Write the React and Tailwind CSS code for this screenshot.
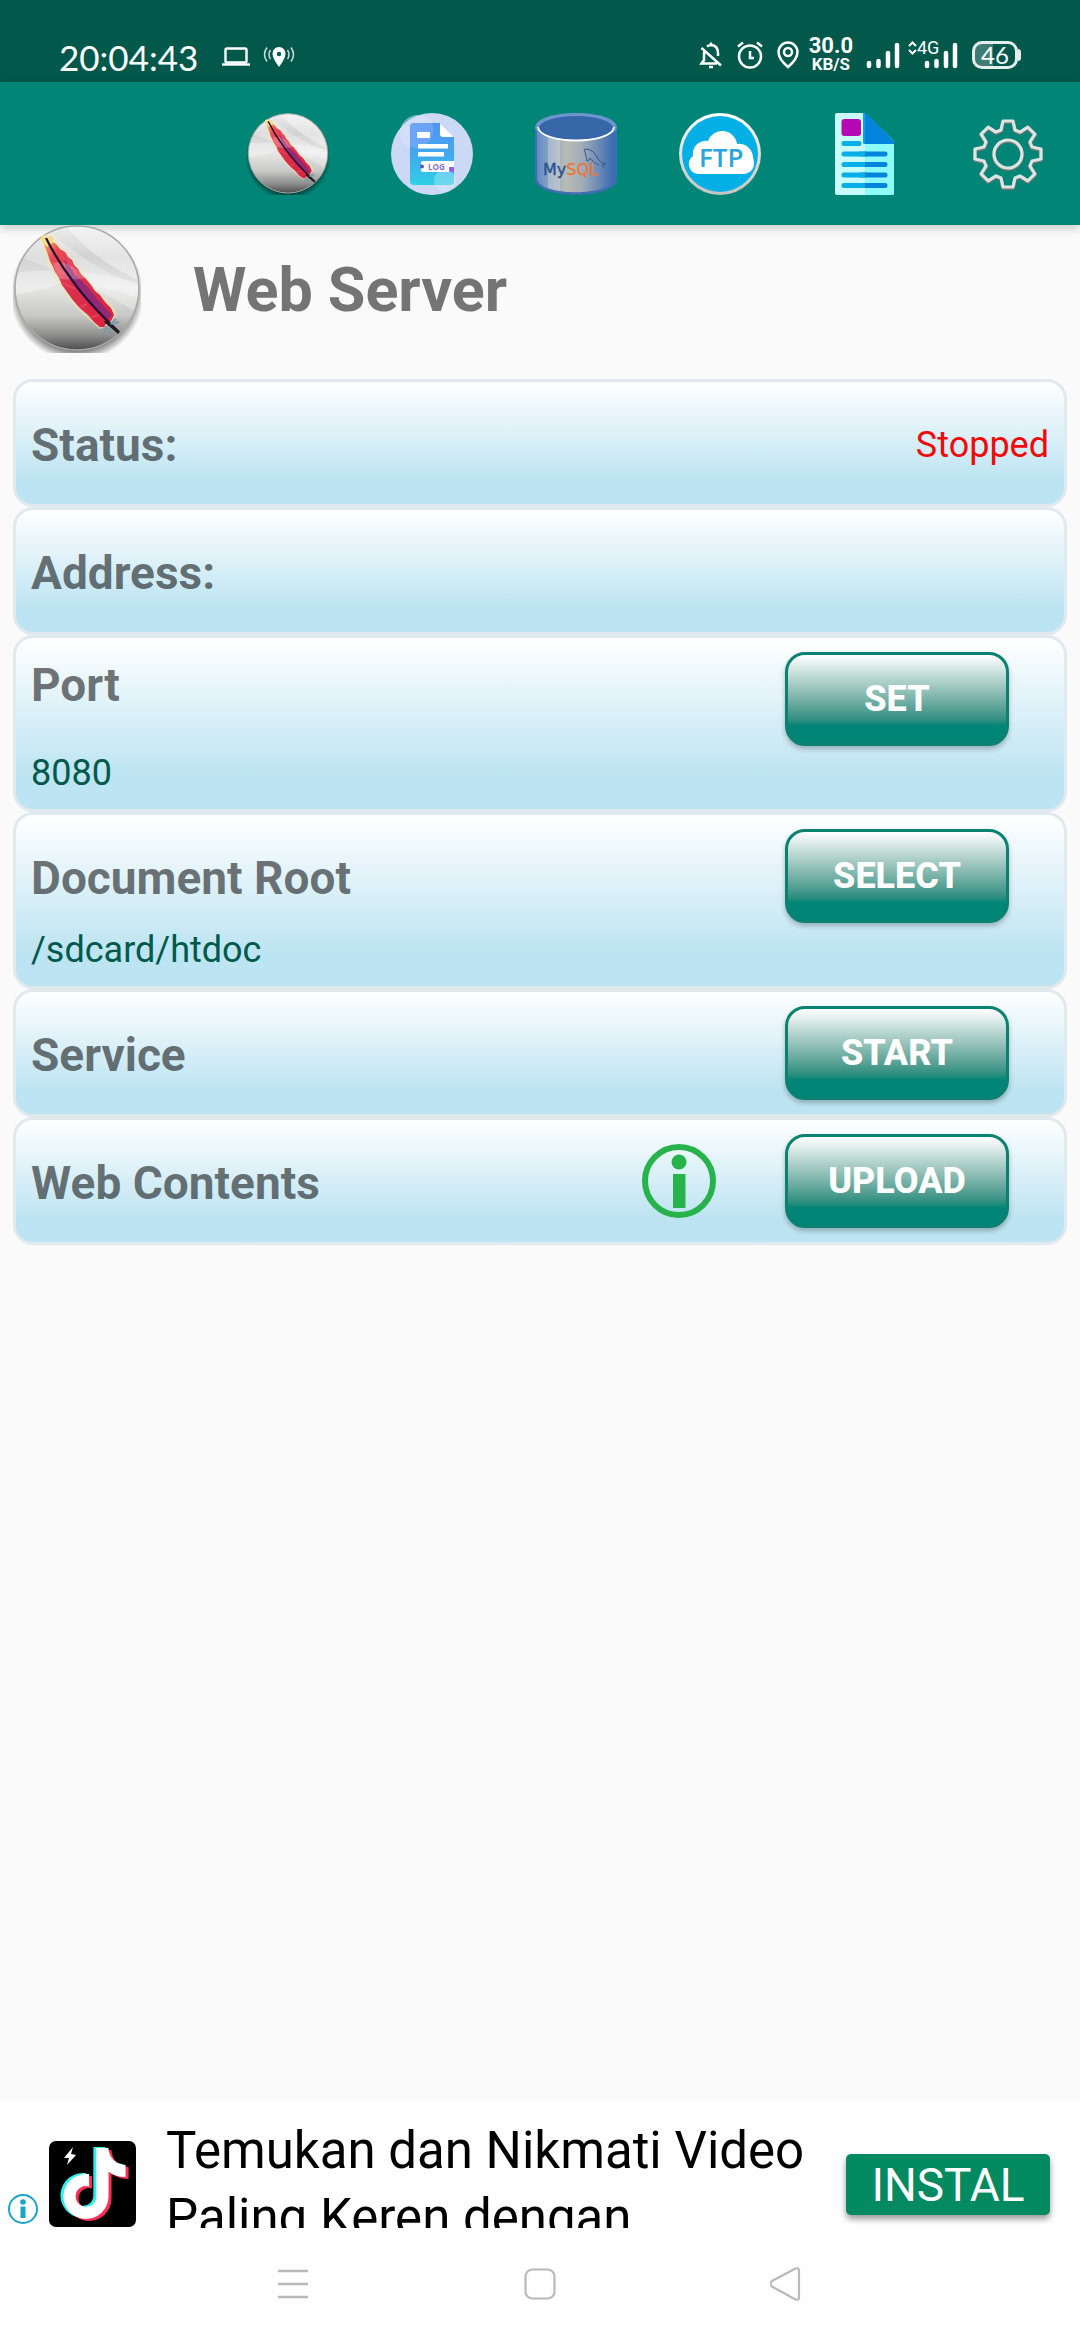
import { FaTiktok } from "react-icons/fa6";
import { useId } from "react";

function FeatherLogo({ className }) {
  const id = useId();
  return (
    <svg viewBox="0 0 128 128" className={className} aria-hidden="true">
      <defs>
        <linearGradient id={id + "m"} x1="0" y1="0" x2="0" y2="1">
          <stop offset="0" stopColor="#ededed" />
          <stop offset="0.25" stopColor="#d2d2d2" />
          <stop offset="0.5" stopColor="#e6e6e6" />
          <stop offset="0.72" stopColor="#c8c8c6" />
          <stop offset="0.88" stopColor="#8e8e8e" />
          <stop offset="1" stopColor="#4c4c4c" />
        </linearGradient>
        <linearGradient id={id + "f"} x1="0" y1="0" x2="1" y2="1">
          <stop offset="0" stopColor="#f6b06a" />
          <stop offset="0.15" stopColor="#ea4a55" />
          <stop offset="0.45" stopColor="#d8324f" />
          <stop offset="1" stopColor="#e0203a" />
        </linearGradient>
        <radialGradient id={id + "s"} cx="0.5" cy="0.5" r="0.5">
          <stop offset="0.84" stopColor="#000" stopOpacity="0.5" />
          <stop offset="1" stopColor="#000" stopOpacity="0" />
        </radialGradient>
        <clipPath id={id + "c"}>
          <circle cx="64" cy="63" r="61" />
        </clipPath>
      </defs>
      <circle cx="64" cy="69" r="67" fill={`url(#${id}s)`} />
      <circle cx="64" cy="63" r="62" fill={`url(#${id}m)`} stroke="#a9a9a9" strokeWidth="1.5" />
      <g clipPath={`url(#${id}c)`}>
        <path d="M0 30 Q60 48 128 90 V62 Q70 40 30 0 Z" fill="#fff" opacity="0.28" />
        <path d="M52 0 Q80 35 128 56 V20 L90 0 Z" fill="#fff" opacity="0.4" />
        <path d="M0 70 Q30 66 50 57 Q90 60 128 74 V58 Q60 40 0 48 Z" fill="#fff" opacity="0.3" />
      </g>
      <path
        d="M30 12 L32 23 Q36 38 42 48 Q47 59 54 68 Q61 79 69 86 L87 102 L94 99 L102 88 Q94 77 82 66 Q72 51 60 38 Q53 28 46 23 L38 12 Z"
        fill="none"
        stroke="#f2e7a8"
        strokeWidth="4"
        strokeLinejoin="round"
        opacity="0.5"
      />
      <path
        d="M31 20 L34 27 L37 36 L40 42 L42 47 L46 53 L49 60 L54 67 L59 74 L64 80 L69 85 L75 90 L81 97 L87 102 L91 102 L94 97 L98 96 L101 90 L98 83 L92 77 L87 70 L82 66 L78 60 L73 54 L68 49 L65 44 L61 40 L59 35 L55 32 L52 27 L47 24 L43 19 L38 16 Z"
        fill={`url(#${id}f)`}
      />
      <path d="M50 30 Q58 40 61 49 Q75 61 87 77 L99 90 L94 95 Q79 82 68 67 Q61 58 54 47 Z" fill="#7c2a83" opacity="0.75" />
      <path d="M46 26 L56 40 M52 28 L59 44 M57 35 L63 50 M40 40 L52 50 M50 58 L62 64 M68 82 L74 79 M78 92 L86 90" stroke="#f0455d" strokeWidth="1.5" fill="none" />
      <path d="M27 14 L30 10 L33 14 L39 10 L41 17 L34 22 Z" fill="#f6dc86" />
      <path d="M44 53 Q58 56 72 53 L66 46 Q52 35 40 38 Z" fill="#fff" opacity="0.22" />
      <path d="M33 13 Q44 35 59 55 Q75 78 106 107" stroke="#241036" strokeWidth="2.2" fill="none" />
      <path d="M94 100 L106 97 M96 101 L103 94 M93 101 L92 109 M95 103 L98 109" stroke="#8199a6" strokeWidth="2.2" />
      <path d="M92 96 L106 108" stroke="#20201e" strokeWidth="2.8" />
    </svg>
  );
}

function LogLogo({ className }) {
  return (
    <svg viewBox="0 0 82 82" className={className} aria-hidden="true">
      <defs>
        <linearGradient id="logPage" x1="0" y1="0" x2="0" y2="1">
          <stop offset="0" stopColor="#5194f2" />
          <stop offset="0.5" stopColor="#42a8ee" />
          <stop offset="1" stopColor="#2fcfe6" />
        </linearGradient>
      </defs>
      <circle cx="41" cy="41" r="41" fill="#cbd9f7" />
      <circle cx="27" cy="20" r="18" fill="#dbe4fb" opacity="0.5" />
      <path d="M23 10 H49 L63 24 V68 Q63 72 59 72 H23 Q19 72 19 68 V14 Q19 10 23 10 Z" fill="url(#logPage)" />
      <path d="M19 34 V14 Q19 10 23 10 H41 A18 18 0 0 1 19 34 Z" fill="#7aa8f6" opacity="0.7" />
      <path d="M49 10 V21 Q49 24 52 24 H63 Z" fill="#fff" />
      <path d="M26 19 h13 v6 h-13 Z M27 31 h30 v4.500 h-30 Z M27 39 h26 v4.500 h-26 Z" fill="#fff" />
      <path d="M32 48 H63 V59 H32 Q30 59 30 57 V50 Q30 48 32 48 Z" fill="#fff" />
      <circle cx="31" cy="53.500" r="2" fill="#6b4fc4" />
      <path d="M63 54 H58 V59 H63 Z" fill="#8e63e0" />
      <text x="37" y="57" fontFamily="Open Sans, sans-serif" fontWeight="700" fontSize="8" fill="#8b6fd0">LOG</text>
      <circle cx="54" cy="68" r="11" fill="#d7f0fb" opacity="0.35" />
    </svg>
  );
}

function MySqlLogo({ className }) {
  return (
    <svg viewBox="0 0 82 82" className={className} aria-hidden="true">
      <defs>
        <linearGradient id="drum">
          <stop offset="0" stopColor="#5f8cc6" />
          <stop offset="0.16" stopColor="#8ba2bf" />
          <stop offset="0.38" stopColor="#b9bcb4" />
          <stop offset="0.6" stopColor="#9eabb8" />
          <stop offset="1" stopColor="#3a6ab0" />
        </linearGradient>
      </defs>
      <path d="M0 15 V66 C0 87 82 87 82 66 V15 Z" fill="#3f6db3" />
      <path d="M2 16 V65 C2 84 79 84 79 65 V16 Z" fill="url(#drum)" />
      <path d="M13 22 Q18 26 25 27 V78 Q18 77 13 75 Z" fill="#e8edf2" opacity="0.3" />
      <ellipse cx="41" cy="14" rx="41" ry="14" fill="#6d96cf" />
      <ellipse cx="41" cy="15" rx="37" ry="12" fill="#3665a8" />
      <path d="M3 14 C5 32 77 32 79 14" fill="none" stroke="#fff" strokeWidth="1.8" />
      <path
        d="M52 48 Q51 43 50 39 Q48 36 50 36 Q58 36 62 44 Q63 47 66 49 L71 51 L67 52 L69 55 M52 48 Q54 48 55 45 Q58 50 64 52"
        fill="none"
        stroke="#2e5a88"
        strokeWidth="1"
      />
      <text x="8" y="62" fontFamily="DejaVu Sans, sans-serif" fontSize="16" fill="#28538f" stroke="#28538f" strokeWidth="0.400">
        My<tspan fill="#e9773a" stroke="#e9773a">SQL</tspan>
      </text>
    </svg>
  );
}

function FtpLogo({ className }) {
  return (
    <svg viewBox="0 0 82 82" className={className} aria-hidden="true">
      <defs>
        <linearGradient id="ring" x1="0" y1="0" x2="0" y2="1">
          <stop offset="0" stopColor="#fff" />
          <stop offset="1" stopColor="#c2c4c0" />
        </linearGradient>
      </defs>
      <circle cx="41" cy="41" r="41" fill="url(#ring)" />
      <circle cx="41" cy="41" r="38" fill="#04afe6" />
      <path d="M19 61 A10 10 0 0 1 14 43 A13 13 0 0 1 29 28 A15 15 0 0 1 58 31 A14 14 0 0 1 74 44 Q78 58 66 61 Z" fill="#fff" />
      <text x="20" y="54" fontFamily="Open Sans, sans-serif" fontWeight="600" fontSize="26" fill="#2aa5d8">FTP</text>
    </svg>
  );
}

function DocumentLogo({ className }) {
  return (
    <svg viewBox="0 0 82 82" className={className} aria-hidden="true">
      <path d="M14 0 H41 L71 28 V80 Q71 82 69 82 H14 Q12 82 12 80 V2 Q12 0 14 0 Z" fill="#c8fcfb" />
      <path d="M42 0 L71 28 V80 Q71 82 69 82 H42 Z" fill="#8cfdf9" />
      <path d="M40 0 H43 L71 28 V31 H42 Q40 31 40 29 Z" fill="#0284dc" />
      <path d="M40 0 H42 V31 Q40 31 40 29 Z" fill="#0aa4e2" />
      <rect x="18.500" y="6" width="19.500" height="17" rx="3" fill="#b509b3" />
      <path d="M21 30.500 H36 M21 41 H42 M21 51.500 H42 M21 62 H42 M21 72.500 H42" stroke="#07aee8" strokeWidth="5" strokeLinecap="round" />
      <path d="M42 41 H62 M42 51.500 H62 M42 62 H62 M42 72.500 H62" stroke="#0284dc" strokeWidth="5" strokeLinecap="round" />
      <path d="M36 41 H42 M36 51.500 H42 M36 62 H42 M36 72.500 H42" stroke="#07aee8" strokeWidth="5" />
    </svg>
  );
}

/* Outline of an eight-toothed wheel: tooth tips at radius 33, valleys at 24. */
const gearPath = (() => {
  const points = [];
  for (let i = 0; i < 8; i++) {
    const a = (i * Math.PI) / 4;
    [[-7, 24], [-5, 33], [5, 33], [7, 24]].forEach(([x, r]) => {
      points.push(
        (41 + x * Math.cos(a) + r * Math.sin(a)).toFixed(1) + " " + (41 + x * Math.sin(a) - r * Math.cos(a)).toFixed(1)
      );
    });
  }
  return "M" + points.join(" L") + " Z";
})();

function GearLogo({ className }) {
  return (
    <svg viewBox="0 0 82 82" className={className} fill="none" aria-hidden="true">
      <g stroke="#6f7775" strokeWidth="4" strokeLinejoin="round" transform="translate(0 1)">
        <path d={gearPath} />
        <circle cx="41" cy="41" r="14" />
      </g>
      <g stroke="#dde5e3" strokeWidth="3.2" strokeLinejoin="round">
        <path d={gearPath} />
        <circle cx="41" cy="41" r="14" />
      </g>
    </svg>
  );
}

function SignalBars() {
  return (
    <svg viewBox="0 0 34 28" className="h-7 w-[34px]" stroke="#fff" strokeWidth="4.500" strokeLinecap="round" aria-hidden="true">
      <path d="M3 22 V25 M12.500 20 V25 M22 12 V25 M31 4 V25" />
    </svg>
  );
}

function StatusBar() {
  return (
    <div className="flex h-[82px] items-end justify-between bg-[#01584b] pr-[59px] pb-[9px] pl-[59px] text-white">
      <div className="flex items-center">
        <time className="w-[162px] font-[Lato,sans-serif] text-[35px] leading-8">20:04:43</time>
        <svg viewBox="0 0 30 22" className="h-[22px] w-[30px]" fill="none" stroke="#fff" aria-hidden="true">
          <rect x="4.500" y="2.500" width="21" height="14" rx="1.500" strokeWidth="2.400" />
          <path d="M1 18.500 H29" strokeWidth="2.400" />
        </svg>
        <svg viewBox="0 0 32 22" className="ml-3 h-[22px] w-8" fill="none" stroke="#fff" aria-hidden="true">
          <path d="M16 1 A6.500 6.500 0 0 0 9.500 8 Q10 13 16 21 Q22 13 22.500 8 A6.500 6.500 0 0 0 16 1 Z" fill="#fff" stroke="none" />
          <circle cx="16" cy="8" r="2.200" fill="#01584b" stroke="none" />
          <path d="M7.500 4 Q4.500 8.500 7.500 13 M4 1.500 Q-1 8.500 4 15.500 M24.500 4 Q27.500 8.500 24.500 13 M28 1.500 Q33 8.500 28 15.500" strokeWidth="1.500" opacity="0.8" />
        </svg>
      </div>
      <div className="flex items-center">
        <svg viewBox="0 0 24 28" className="h-7 w-6" fill="none" stroke="#fff" strokeWidth="2.500" aria-hidden="true">
          <path d="M8 5.500 Q10 4 12 4 Q19 4.500 19 12 V15 M5.500 9 Q5 11 5 14 V19 L2.500 22.500 H18 M12 1.500 V4 M2.500 7 L22 24.500" />
          <path d="M10 26 H14" />
        </svg>
        <svg viewBox="0 0 28 28" className="ml-[13px] h-7 w-7" fill="none" stroke="#fff" strokeWidth="2.500" aria-hidden="true">
          <circle cx="14" cy="15.500" r="11" />
          <path d="M14 10 V17 H18 M2 5.500 L7 1.500 M26 5.500 L21 1.500" />
        </svg>
        <svg viewBox="0 0 24 28" className="ml-3 h-7 w-6" fill="none" stroke="#fff" strokeWidth="2.500" aria-hidden="true">
          <path d="M12 1.500 A9.500 9.500 0 0 0 2.500 11 Q2.500 18 12 26 Q21.500 18 21.500 11 A9.500 9.500 0 0 0 12 1.500 Z" />
          <circle cx="12" cy="11" r="4" />
        </svg>
        <div className="ml-[9px] text-center font-bold">
          <div className="text-[22px] leading-[18px]">30.0</div>
          <div className="text-[17px] leading-[18px]">KB/S</div>
        </div>
        <div className="ml-[13px]">
          <SignalBars />
        </div>
        <div className="relative ml-6">
          <SignalBars />
          <div className="absolute -top-[2px] -left-4 flex items-center bg-[#01584b]">
            <svg viewBox="0 0 9 16" className="h-4 w-[9px]" fill="none" stroke="#fff" strokeWidth="2" aria-hidden="true">
              <path d="M1 6 L4.500 2.500 L8 6 M1 10 L4.500 13.500 L8 10" />
            </svg>
            <span className="text-[18px] leading-[18px]">4G</span>
          </div>
        </div>
        <div className="ml-[14px] flex items-center">
          <div className="flex h-7 w-[46px] items-center justify-center rounded-[10px] border-[3px] border-[#e4efed] bg-linear-to-r from-[#3d7d73] from-45% to-[#01584b] to-45% font-[Lato,sans-serif] text-2xl leading-none">
            46
          </div>
          <div className="h-3 w-[3px] rounded-r-sm bg-[#e4efed]" />
        </div>
      </div>
    </div>
  );
}

const tabs = [
  ["Web server", FeatherLogo],
  ["Logs", LogLogo],
  ["MySQL", MySqlLogo],
  ["FTP", FtpLogo],
  ["Documents", DocumentLogo],
  ["Settings", GearLogo],
];

function Card({ label, labelTop, value, children }) {
  return (
    <section
      className={
        "rounded-[20px] border-[3px] border-[#dfe9ee] bg-linear-to-b from-white to-[#bde4f2] to-80% px-[15px] pt-[14px] " +
        (value ? "pb-[11px]" : "pb-[14px]")
      }
    >
      <div className={"flex min-h-[94px] " + (labelTop ? "items-start" : "items-center")}>
        <h2 className={"flex-1 text-[46px] font-bold text-black/55 " + (labelTop ? "leading-[66px]" : "pt-1 leading-[53px]")}>{label}</h2>
        {children}
      </div>
      {value && <p className="text-4xl leading-[54px] -mb-[2px] text-[#00594b]">{value}</p>}
    </section>
  );
}

function ActionButton({ children }) {
  return (
    <button
      type="button"
      className="mr-10 h-[94px] w-[224px] rounded-[20px] border-[3px] border-[#0b8172] bg-linear-to-b from-white to-[#018577] to-80% text-4xl font-extrabold text-white shadow-[0_3px_5px_rgba(0,0,0,0.25)]"
    >
      {children}
    </button>
  );
}

function AdBanner() {
  return (
    <aside className="mt-auto flex h-32 items-start overflow-hidden bg-[#fefefe] pr-[30px] pl-2">
      <button type="button" aria-label="About this ad" className="mt-[94px]">
        <svg viewBox="0 0 30 30" className="h-[30px] w-[30px]" aria-hidden="true">
          <circle cx="15" cy="15" r="14" fill="#fff" stroke="#19a5c4" strokeWidth="2" />
          <circle cx="15" cy="8" r="2.800" fill="#19a5c4" />
          <path d="M12.500 12.500 H17.500 V24 H12.500 Z" fill="#19a5c4" />
        </svg>
      </button>
      <svg viewBox="0 0 87 86" className="mt-[41px] ml-[11px] h-[86px] w-[87px]" role="img" aria-label="TikTok Lite">
        <rect width="87" height="86" rx="7" fill="#000" />
        <FaTiktok x="7" y="6" size={71} color="#2bf0ea" />
        <FaTiktok x="13" y="9" size={71} color="#fa2d56" />
        <FaTiktok x="10" y="7" size={71} color="#fff" />
        <path d="M24 6 L15 17 L20 17 L18 24 L27 14 L22 13 Z" fill="#fff" />
      </svg>
      <p className="ml-[30px] flex-1 pt-[17px] text-[51px] leading-[67px] text-black">
        Temukan dan Nikmati Video Paling Keren dengan…
      </p>
      <button
        type="button"
        className="mt-[54px] ml-2 h-[61px] w-[204px] rounded-[5px] bg-[#048a60] text-[46px] leading-[56px] text-white shadow-[0_4px_6px_rgba(0,0,0,0.4)]"
      >
        INSTAL
      </button>
    </aside>
  );
}

function NavigationBar() {
  return (
    <nav className="flex h-28 justify-center gap-[213px] bg-[#fefefe] pt-[39px]">
      <button type="button" aria-label="Recent apps" className="h-[34px] w-[34px]">
        <svg viewBox="0 0 34 34" stroke="#b9b9b9" strokeWidth="2.500" aria-hidden="true">
          <path d="M2 4 H32 M2 17 H32 M2 30 H32" />
        </svg>
      </button>
      <button type="button" aria-label="Home" className="h-[34px] w-[34px]">
        <svg viewBox="0 0 34 34" fill="none" stroke="#b9b9b9" strokeWidth="2.200" aria-hidden="true">
          <rect x="2.500" y="2.500" width="29" height="29" rx="7" />
        </svg>
      </button>
      <button type="button" aria-label="Back" className="h-[34px] w-[34px]">
        <svg viewBox="0 0 34 34" fill="none" stroke="#b9b9b9" strokeWidth="2.200" aria-hidden="true">
          <path d="M25.500 1.500 L2 14 Q-1 17 2 19.500 L25.500 32.500 Q29 33.500 29 30.500 V3.500 Q29 0.500 25.500 1.500 Z" />
        </svg>
      </button>
    </nav>
  );
}

export default function App() {
  return (
    <div className="flex min-h-screen flex-col bg-[#fafafa] font-[Roboto,sans-serif]">
      <StatusBar />
      <header className="flex h-[143px] justify-end bg-[#018577] shadow-[0_3px_9px_rgba(0,0,0,0.2)]">
        {tabs.map(([name, Logo]) => (
          <button key={name} type="button" aria-label={name} className="flex w-36 items-center justify-center">
            <Logo className="h-[82px] w-[82px]" />
          </button>
        ))}
      </header>
      <main className="px-[13px] pb-6">
        <div className="flex items-center gap-[52px] pb-[26px]">
          <FeatherLogo className="h-32 w-32" />
          <h1 className="pt-1 text-[61px] font-bold text-[#747474]">Web Server</h1>
        </div>
        <Card label="Status:">
          <output className="pt-1 text-4xl text-[#f00a0a]">Stopped</output>
        </Card>
        <Card label="Address:" />
        <Card label="Port" value="8080" labelTop>
          <ActionButton>SET</ActionButton>
        </Card>
        <Card label="Document Root" value="/sdcard/htdoc">
          <ActionButton>SELECT</ActionButton>
        </Card>
        <Card label="Service">
          <ActionButton>START</ActionButton>
        </Card>
        <Card label="Web Contents">
          <button type="button" aria-label="About web contents" className="mr-[68px]">
            <svg viewBox="0 0 76 76" className="h-[76px] w-[76px]" aria-hidden="true">
              <circle cx="38" cy="38" r="34" fill="none" stroke="#28b24c" strokeWidth="6" />
              <circle cx="38" cy="19" r="7.500" fill="#28b24c" />
              <path d="M32 31 H44.500 V65 H32 Z" fill="#28b24c" />
            </svg>
          </button>
          <ActionButton>UPLOAD</ActionButton>
        </Card>
      </main>
      <AdBanner />
      <NavigationBar />
    </div>
  );
}
